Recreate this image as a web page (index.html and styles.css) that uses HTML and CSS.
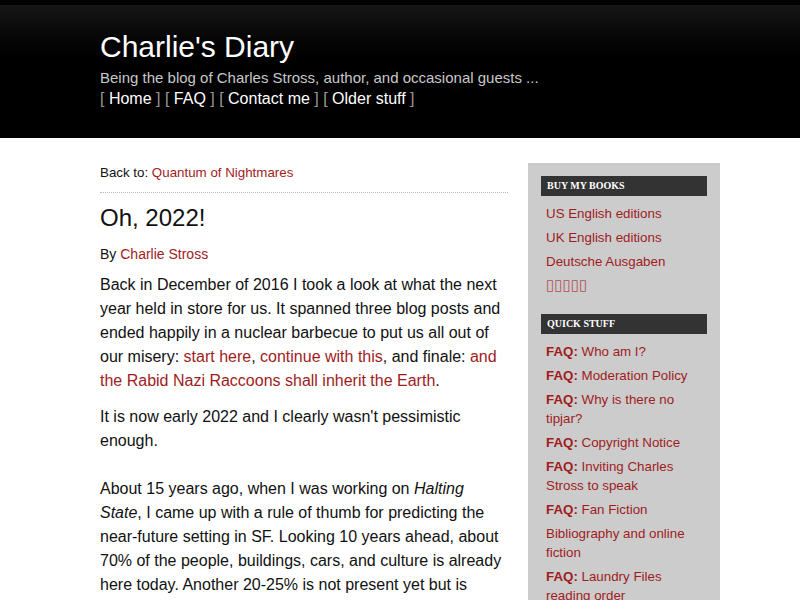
FILE: index.html
```html
<!DOCTYPE html>
<html>
<head>
<meta charset="utf-8">
<title>Oh, 2022! - Charlie's Diary</title>
<link rel="stylesheet" href="styles.css">
</head>
<body>
<header class="banner">
  <div class="banner-inner">
    <h1 class="site-title">Charlie's Diary</h1>
    <p class="tagline">Being the blog of Charles Stross, author, and occasional guests ...</p>
    <nav class="topnav">[ <a href="#">Home</a> ] [ <a href="#">FAQ</a> ] [ <a href="#">Contact me</a> ] [ <a href="#">Older stuff</a> ]</nav>
  </div>
</header>
<div class="page">
  <main class="content">
    <p class="backto">Back to: <a href="#">Quantum of Nightmares</a></p>
    <h2 class="entry-title">Oh, 2022!</h2>
    <p class="byline">By <a href="#">Charlie Stross</a></p>
    <div class="entry">
      <p>Back in December of 2016 I took a look at what the next year held in store for us. It spanned three blog posts and ended happily in a nuclear barbecue to put us all out of our misery: <a href="#">start here</a>, <a href="#">continue with this</a>, and finale: <a href="#">and the Rabid Nazi Raccoons shall inherit the Earth</a>.</p>
      <p>It is now early 2022 and I clearly wasn't pessimistic enough.<br><br>About 15 years ago, when I was working on <em>Halting State</em>, I came up with a rule of thumb for predicting the near-future setting in SF. Looking 10 years ahead, about 70% of the people, buildings, cars, and culture is already here today. Another 20-25% is not present yet but is predictable.</p>
    </div>
  </main>
  <aside class="sidebar">
    <section class="widget">
      <h3 class="widget-title">Buy my books</h3>
      <ul class="widget-list">
        <li><a href="#">US English editions</a></li>
        <li><a href="#">UK English editions</a></li>
        <li><a href="#">Deutsche Ausgaben</a></li>
        <li><a href="#" class="tofu">▯▯▯▯▯</a></li>
      </ul>
    </section>
    <section class="widget">
      <h3 class="widget-title">Quick stuff</h3>
      <ul class="widget-list">
        <li><a href="#"><b>FAQ:</b> Who am I?</a></li>
        <li><a href="#"><b>FAQ:</b> Moderation Policy</a></li>
        <li><a href="#"><b>FAQ:</b> Why is there no tipjar?</a></li>
        <li><a href="#"><b>FAQ:</b> Copyright Notice</a></li>
        <li><a href="#"><b>FAQ:</b> Inviting Charles Stross to speak</a></li>
        <li><a href="#"><b>FAQ:</b> Fan Fiction</a></li>
        <li><a href="#">Bibliography and online fiction</a></li>
        <li><a href="#"><b>FAQ:</b> Laundry Files reading order</a></li>
      </ul>
    </section>
  </aside>
</div>
</body>
</html>
```
FILE: styles.css
```css
html, body {
  margin: 0;
  padding: 0;
  background: #fff;
  font-family: "Liberation Sans", Arial, sans-serif;
  color: #111;
}
a {
  color: #a01c1c;
  text-decoration: none;
}
.banner {
  background: linear-gradient(to bottom, #000 0, #000 5px, #161616 5px, #050505 40px, #000 60px, #000 100%);
  height: 138px;
  box-sizing: border-box;
  padding-top: 28px;
}
.banner-inner {
  width: 640px;
  margin: 0 auto;
  padding-left: 20px;
  box-sizing: border-box;
}
.site-title {
  margin: 0;
  font-weight: normal;
  font-size: 30px;
  line-height: 38px;
  color: #fff;
}
.tagline {
  margin: 2px 0 0;
  font-size: 15px;
  line-height: 19px;
  color: #c8c8c8;
}
.topnav {
  margin-top: 1px;
  font-size: 16px;
  line-height: 22px;
  color: #999;
}
.topnav a {
  color: #fff;
}
.page {
  width: 640px;
  margin: 0 auto;
  padding: 25px 0 0 20px;
  box-sizing: border-box;
  display: flex;
  gap: 20px;
  align-items: flex-start;
}
.content {
  width: 408px;
  flex: none;
}
.backto {
  margin: 0;
  padding: 1px 0 10px;
  font-size: 13.33px;
  line-height: 18px;
  border-bottom: 1px dotted #bbb;
}
.entry-title {
  margin: 9px 0 0;
  font-weight: normal;
  font-size: 24px;
  line-height: 32px;
  color: #111;
}
.byline {
  margin: 10px 0 0;
  font-size: 14px;
  line-height: 20px;
}
.entry {
  margin-top: 9px;
  font-size: 16px;
  line-height: 24px;
}
.entry p {
  margin: 0 0 12px;
}
.sidebar {
  width: 192px;
  flex: none;
  background: #ccc;
  padding: 13px 13px 20px;
  box-sizing: border-box;
}
.widget + .widget {
  margin-top: 19px;
}
.widget-title {
  margin: 0;
  background: #333;
  color: #fff;
  font-family: "Liberation Serif", "Times New Roman", serif;
  font-weight: bold;
  font-size: 10px;
  line-height: 20px;
  text-transform: uppercase;
  padding: 0 6px;
}
.widget-list {
  list-style: none;
  margin: 0;
  padding: 8px 5px 0;
}
.widget-list li {
  font-size: 13.33px;
  line-height: 19px;
  margin-bottom: 5px;
}
.tofu {
  font-family: "DejaVu Sans", sans-serif;
  font-size: 15px;
  color: #b05050;
}
```
